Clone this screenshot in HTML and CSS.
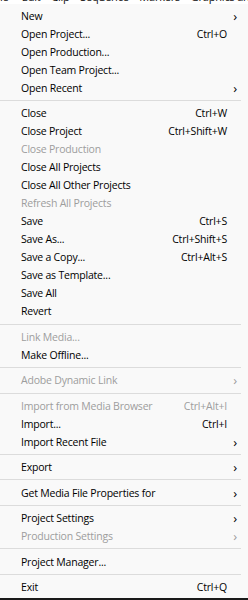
FILE: index.html
```html
<!DOCTYPE html>
<html>
<head>
<meta charset="utf-8">
<link rel="stylesheet" href="styles.css">
</head>
<body>
<div class="menubar"><span class="mb-text">le&nbsp;&nbsp;&nbsp;&nbsp;&nbsp;Edit&nbsp;&nbsp;&nbsp;&nbsp;Clip&nbsp;&nbsp;&nbsp;&nbsp;Sequence&nbsp;&nbsp;&nbsp;&nbsp;Markers&nbsp;&nbsp;&nbsp;&nbsp;Graphics and Window</span></div>
<div class="menu">
  <div class="item"><span class="label">New</span><span class="key"></span><span class="arrow">&#x203A;</span></div>
  <div class="item"><span class="label">Open Project...</span><span class="key">Ctrl+O</span><span class="arrow"></span></div>
  <div class="item"><span class="label">Open Production...</span><span class="key"></span><span class="arrow"></span></div>
  <div class="item"><span class="label">Open Team Project...</span><span class="key"></span><span class="arrow"></span></div>
  <div class="item"><span class="label">Open Recent</span><span class="key"></span><span class="arrow">&#x203A;</span></div>
  <div class="sep"></div>
  <div class="item"><span class="label">Close</span><span class="key">Ctrl+W</span><span class="arrow"></span></div>
  <div class="item"><span class="label">Close Project</span><span class="key">Ctrl+Shift+W</span><span class="arrow"></span></div>
  <div class="item off"><span class="label">Close Production</span><span class="key"></span><span class="arrow"></span></div>
  <div class="item"><span class="label">Close All Projects</span><span class="key"></span><span class="arrow"></span></div>
  <div class="item"><span class="label">Close All Other Projects</span><span class="key"></span><span class="arrow"></span></div>
  <div class="item off"><span class="label">Refresh All Projects</span><span class="key"></span><span class="arrow"></span></div>
  <div class="item"><span class="label">Save</span><span class="key">Ctrl+S</span><span class="arrow"></span></div>
  <div class="item"><span class="label">Save As...</span><span class="key">Ctrl+Shift+S</span><span class="arrow"></span></div>
  <div class="item"><span class="label">Save a Copy...</span><span class="key">Ctrl+Alt+S</span><span class="arrow"></span></div>
  <div class="item"><span class="label">Save as Template...</span><span class="key"></span><span class="arrow"></span></div>
  <div class="item"><span class="label">Save All</span><span class="key"></span><span class="arrow"></span></div>
  <div class="item"><span class="label">Revert</span><span class="key"></span><span class="arrow"></span></div>
  <div class="sep"></div>
  <div class="item off"><span class="label">Link Media...</span><span class="key"></span><span class="arrow"></span></div>
  <div class="item"><span class="label">Make Offline...</span><span class="key"></span><span class="arrow"></span></div>
  <div class="sep"></div>
  <div class="item off"><span class="label">Adobe Dynamic Link</span><span class="key"></span><span class="arrow">&#x203A;</span></div>
  <div class="sep"></div>
  <div class="item off"><span class="label">Import from Media Browser</span><span class="key">Ctrl+Alt+I</span><span class="arrow"></span></div>
  <div class="item"><span class="label">Import...</span><span class="key">Ctrl+I</span><span class="arrow"></span></div>
  <div class="item"><span class="label">Import Recent File</span><span class="key"></span><span class="arrow">&#x203A;</span></div>
  <div class="sep"></div>
  <div class="item"><span class="label">Export</span><span class="key"></span><span class="arrow">&#x203A;</span></div>
  <div class="sep"></div>
  <div class="item"><span class="label">Get Media File Properties for</span><span class="key"></span><span class="arrow">&#x203A;</span></div>
  <div class="sep"></div>
  <div class="item"><span class="label">Project Settings</span><span class="key"></span><span class="arrow">&#x203A;</span></div>
  <div class="item off"><span class="label">Production Settings</span><span class="key"></span><span class="arrow">&#x203A;</span></div>
  <div class="sep"></div>
  <div class="item"><span class="label">Project Manager...</span><span class="key"></span><span class="arrow"></span></div>
  <div class="sep"></div>
  <div class="item"><span class="label">Exit</span><span class="key">Ctrl+Q</span><span class="arrow"></span></div>
</div>
<div class="bottom"></div>
</body>
</html>
```
FILE: styles.css
```css
html, body {
  margin: 0;
  padding: 0;
  background: #f9f9f9;
}
body {
  width: 248px;
  height: 600px;
  overflow: hidden;
  font-family: "Open Sans", "Noto Sans", sans-serif;
  font-size: 10.5px;
  letter-spacing: -0.2px;
  color: #000;
}
.menubar {
  height: 4px;
  overflow: hidden;
  background: #ffffff;
}
.mb-text {
  display: block;
  white-space: nowrap;
  margin-top: -10px;
  font-size: 11px;
  line-height: 14px;
  color: #111;
}
.menu {
  display: flex;
  flex-direction: column;
  padding-top: 3px;
  height: 592px;
  box-sizing: border-box;
  background: #f9f9f9;
}
.item {
  display: grid;
  grid-template-columns: 1fr auto 21px;
  align-items: center;
  height: 18px;
  padding-left: 21px;
  line-height: 18px;
  white-space: nowrap;
}
.item.off {
  color: #9d9d9d;
}
.key {
  text-align: right;
}
.arrow {
  text-align: center;
  font-size: 13px;
  padding-right: 5px;
}
.sep {
  height: 7.5px;
  display: flex;
  align-items: center;
  padding-right: 7px;
}
.sep::before {
  content: "";
  flex: 1;
  height: 1px;
  background: #dcdcdc;
}
.bottom {
  height: 2px;
  margin-top: 2px;
  background: #1a1a1a;
}
```
